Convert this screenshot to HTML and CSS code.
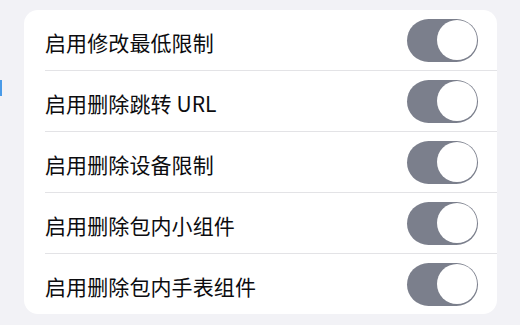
FILE: index.html
```html
<!DOCTYPE html>
<html lang="zh-CN">
<head>
<meta charset="utf-8">
<link rel="stylesheet" href="styles.css">
</head>
<body>
<div class="edge-tab"></div>
<div class="card">
  <div class="row"><span class="label">启用修改最低限制</span><span class="switch"><span class="knob"></span></span></div>
  <div class="row"><span class="label">启用删除跳转 URL</span><span class="switch"><span class="knob"></span></span></div>
  <div class="row"><span class="label">启用删除设备限制</span><span class="switch"><span class="knob"></span></span></div>
  <div class="row"><span class="label">启用删除包内小组件</span><span class="switch"><span class="knob"></span></span></div>
  <div class="row"><span class="label">启用删除包内手表组件</span><span class="switch"><span class="knob"></span></span></div>
</div>
</body>
</html>
```
FILE: styles.css
```css
html, body {
  margin: 0;
  padding: 0;
}
body {
  background: #f2f2f6;
  width: 520px;
  height: 325px;
  overflow: hidden;
  position: relative;
  font-family: "Noto Sans CJK SC", "Noto Sans", sans-serif;
}
.edge-tab {
  position: absolute;
  left: 0;
  top: 80px;
  width: 2px;
  height: 16px;
  background: #4a9be8;
}
.card {
  margin: 10px 0 0 24px;
  width: 473px;
  background: #ffffff;
  border-radius: 14px;
  overflow: hidden;
}
.row {
  height: 60px;
  margin-left: 21px;
  padding-right: 19px;
  display: flex;
  align-items: center;
  justify-content: space-between;
  border-bottom: 1px solid #e3e3e6;
}
.row:last-child {
  border-bottom: none;
}
.label {
  font-size: 21px;
  color: #0c0c0f;
  padding-top: 3px;
  letter-spacing: 0.1px;
}
.switch {
  width: 71px;
  height: 43px;
  border-radius: 22px;
  background: #7b7f8c;
  display: flex;
  align-items: center;
  justify-content: flex-end;
  padding: 0 1.5px;
  box-sizing: border-box;
}
.knob {
  width: 40px;
  height: 40px;
  border-radius: 50%;
  background: #ffffff;
}
```
